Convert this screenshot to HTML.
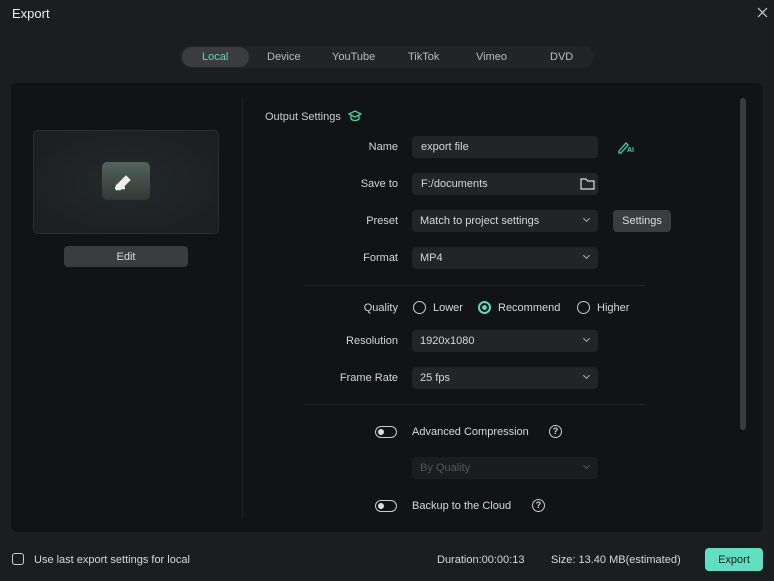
<!DOCTYPE html>
<html><head><style>
*{box-sizing:border-box;margin:0;padding:0}
body{width:774px;height:581px;background:#1c1d20;font-family:"Liberation Sans",sans-serif;color:#d8d8d8;position:relative;overflow:hidden;font-size:11px}
.a{position:absolute}
.lbl{position:absolute;text-align:right;width:120px;font-size:11px;color:#d6d6d6}
.inp{position:absolute;left:412px;width:186px;height:22px;background:#232427;border-radius:4px;padding-left:9px;line-height:23px;font-size:11px;color:#d6d6d6}
.chev{position:absolute;right:9px;top:6px;width:5px;height:5px;border-right:1px solid #aaa;border-bottom:1px solid #aaa;transform:rotate(45deg)}
.tab{position:absolute;top:51px;font-size:11px;color:#bbb}
.radio{position:absolute;width:13px;height:13px;border:1.5px solid #ccc;border-radius:50%}
.tog{position:absolute;width:22px;height:12px;border:1.5px solid #ccc;border-radius:7px}
.tog:after{content:"";position:absolute;left:2px;top:1.5px;width:6px;height:6px;border-radius:50%;background:#ddd}
.q{position:absolute;width:13px;height:13px;border:1.5px solid #ccc;border-radius:50%;font-size:9px;line-height:10px;text-align:center;font-weight:bold}
</style></head><body>
<div class="a" style="left:12px;top:6px;font-size:13px;color:#eee">Export</div>
<svg class="a" style="left:757px;top:7px" width="11" height="11"><path d="M1 1l9 9M10 1l-9 9" stroke="#ccc" stroke-width="1.2"/></svg>
<div class="a" style="left:180px;top:46px;width:414px;height:22px;background:#232427;border-radius:11px"></div>
<div class="a" style="left:182px;top:47px;width:67px;height:20px;background:#3a3c40;border-radius:10px"></div>
<div class="tab" style="left:202px;color:#5fd9b8">Local</div>
<div class="tab" style="left:267px">Device</div>
<div class="tab" style="left:332px">YouTube</div>
<div class="tab" style="left:408px">TikTok</div>
<div class="tab" style="left:476px">Vimeo</div>
<div class="tab" style="left:550px">DVD</div>
<div class="a" style="left:11px;top:83px;width:752px;height:449px;background:#121315;border-radius:6px"></div>
<div class="a" style="left:242px;top:98px;width:1px;height:419px;background:#222326"></div>
<div class="a" style="left:740px;top:98px;width:6px;height:332px;background:#3a3b3e;border-radius:3px"></div>
<div class="a" style="left:33px;top:130px;width:186px;height:104px;background:radial-gradient(ellipse at 50% 50%,#232a28,#1b1d1f);border:1px solid #2b2d30;border-radius:5px"></div>
<div class="a" style="left:102px;top:162px;width:48px;height:38px;border-radius:5px;background:linear-gradient(#56625d,#2f3935)"></div>
<svg class="a" style="left:112px;top:169px" width="26" height="24"><path d="M3 19h10M5 17l9-9 3 3-9 9H5z" stroke="#f0f0f0" stroke-width="2.5" fill="#f0f0f0"/></svg>
<div class="a" style="left:64px;top:246px;width:124px;height:21px;background:#3a3c40;border-radius:4px;text-align:center;line-height:22px;color:#ddd">Edit</div>
<div class="a" style="left:265px;top:111px;color:#ccc">Output Settings</div>
<svg class="a" style="left:348px;top:110px" width="14" height="12"><path d="M1 4l6-3 6 3-6 3zM3 5v4c2 2 6 2 8 0V5" stroke="#3ad3a5" stroke-width="1.3" fill="none"/></svg>
<div class="lbl" style="left:278px;top:141px">Name</div>
<div class="inp" style="top:136px">export file</div>
<svg class="a" style="left:617px;top:140px" width="18" height="14"><path d="M2 11l7-8 2 2-7 8H2z" stroke="#3ad3a5" stroke-width="1.3" fill="none"/><text x="10" y="12" font-size="7" fill="#3ad3a5" font-family="Liberation Sans" font-weight="bold">AI</text></svg>
<div class="lbl" style="left:278px;top:178px">Save to</div>
<div class="inp" style="top:173px">F:/documents</div>
<svg class="a" style="left:580px;top:177px" width="15" height="13"><path d="M1 2h5l1.5 2H14v8H1z" stroke="#ddd" stroke-width="1.2" fill="none"/></svg>
<div class="lbl" style="left:278px;top:215px">Preset</div>
<div class="inp" style="top:210px;padding-left:8px">Match to project settings<div class="chev"></div></div>
<div class="a" style="left:613px;top:210px;width:58px;height:22px;background:#3a3c40;border-radius:4px;text-align:center;line-height:23px;color:#ddd">Settings</div>
<div class="lbl" style="left:278px;top:252px">Format</div>
<div class="inp" style="top:247px;padding-left:8px">MP4<div class="chev"></div></div>
<div class="a" style="left:304px;top:285px;width:341px;height:1px;background:#222326"></div>
<div class="lbl" style="left:278px;top:302px">Quality</div>
<div class="radio" style="left:413px;top:301px"></div><div class="a" style="left:433px;top:302px">Lower</div>
<div class="radio" style="left:478px;top:301px;border:2px solid #5fd9b8;background:radial-gradient(#5fd9b8 35%,transparent 40%)"></div><div class="a" style="left:498px;top:302px">Recommend</div>
<div class="radio" style="left:577px;top:301px"></div><div class="a" style="left:597px;top:302px">Higher</div>
<div class="lbl" style="left:278px;top:335px">Resolution</div>
<div class="inp" style="top:330px;padding-left:8px">1920x1080<div class="chev"></div></div>
<div class="lbl" style="left:278px;top:372px">Frame Rate</div>
<div class="inp" style="top:367px;padding-left:8px">25 fps<div class="chev"></div></div>
<div class="a" style="left:304px;top:404px;width:341px;height:1px;background:#222326"></div>
<div class="tog" style="left:375px;top:426px"></div>
<div class="a" style="left:412px;top:426px">Advanced Compression</div>
<div class="q" style="left:549px;top:425px">?</div>
<div class="inp" style="top:457px;padding-left:8px;background:#1b1c1e;color:#555">By Quality<div class="chev" style="border-color:#555"></div></div>
<div class="tog" style="left:375px;top:500px"></div>
<div class="a" style="left:412px;top:500px">Backup to the Cloud</div>
<div class="q" style="left:532px;top:499px">?</div>
<div class="a" style="left:12px;top:553px;width:12px;height:12px;border:1.5px solid #ccc;border-radius:3px"></div>
<div class="a" style="left:34px;top:554px">Use last export settings for local</div>
<div class="a" style="left:437px;top:554px">Duration:00:00:13</div>
<div class="a" style="left:551px;top:554px">Size: 13.40 MB(estimated)</div>
<div class="a" style="left:705px;top:548px;width:58px;height:23px;background:#5fe0c2;border-radius:4px;text-align:center;line-height:24px;color:#1a1a1a">Export</div>
</body></html>
